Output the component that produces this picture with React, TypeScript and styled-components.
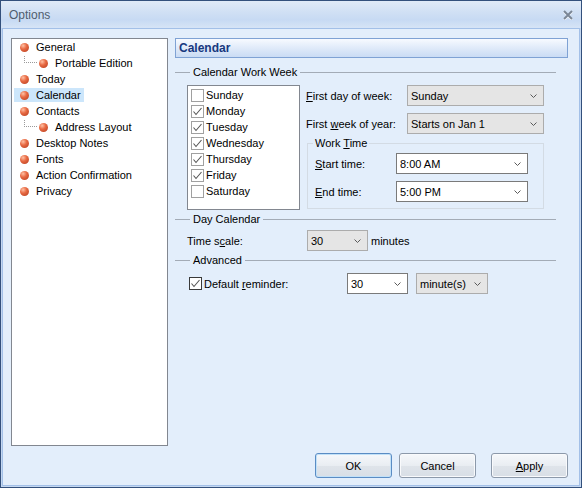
import styled, { createGlobalStyle } from "styled-components";

const GlobalStyle = createGlobalStyle`
  body {
    margin: 0;
    font-family: "Liberation Sans", Arial, sans-serif;
    font-size: 11px;
    color: #000;
  }
  * {
    box-sizing: border-box;
  }
`;

const Window = styled.div`
  width: 582px;
  height: 488px;
  display: flex;
  flex-direction: column;
  border: 1px solid #33507c;
  background: #c4d7f0;
`;

const TitleBar = styled.div`
  height: 27px;
  flex-shrink: 0;
  display: flex;
  align-items: center;
  justify-content: space-between;
  padding: 0 8px;
  background: linear-gradient(#e0eaf7, #cfdff4 45%, #c7daf3 70%, #d6e4f6);
`;

const Title = styled.span`
  font-size: 12px;
  color: #4f5d6e;
`;

const Frame = styled.div`
  flex: 1;
  margin: 0 1px 1px;
  border: 1px solid #a3c0e8;
  background: #e3eefb;
  display: flex;
  flex-direction: column;
  gap: 7px;
  padding: 9px 11px 7px 8px;
`;

const Main = styled.div`
  flex: 1;
  display: flex;
  gap: 7px;
  min-height: 0;
`;

const Tree = styled.div`
  width: 157px;
  flex-shrink: 0;
  border: 1px solid #828790;
  background: #fff;
`;

const TreeRow = styled.div<{ $child?: boolean }>`
  height: 16px;
  display: flex;
  align-items: center;
  padding-left: ${(p) => (p.$child ? 12 : 2)}px;
`;

const Connector = styled.span`
  align-self: flex-start;
  width: 13px;
  height: 7px;
  margin-top: 1px;
  border-left: 1px dotted #9a9a9a;
  border-bottom: 1px dotted #9a9a9a;
`;

const TreeItem = styled.span<{ $selected?: boolean; $child?: boolean }>`
  display: inline-flex;
  align-items: center;
  gap: 7px;
  height: 14px;
  padding: 0 3px 0 ${(p) => (p.$child ? 2 : 6)}px;
  background: ${(p) => (p.$selected ? "#cce6fb" : "transparent")};
`;

const Bullet = styled.span`
  width: 9px;
  height: 9px;
  border-radius: 50%;
  flex-shrink: 0;
  background: radial-gradient(
    circle at 35% 30%,
    #ffc0a4 0%,
    #e86a43 40%,
    #b3391c 100%
  );
`;

const Panel = styled.div`
  flex: 1;
  display: flex;
  flex-direction: column;
`;

const PageHeader = styled.div`
  height: 20px;
  display: flex;
  align-items: center;
  padding-left: 3px;
  border: 1px solid #7fa2d4;
  background: linear-gradient(#f7faff, #dbe7f8 60%, #cadcf4);
  font-size: 12px;
  font-weight: bold;
  color: #17387f;
`;

const Section = styled.div<{ $mt: number }>`
  display: flex;
  align-items: center;
  height: 14px;
  margin-top: ${(p) => p.$mt}px;
  padding-right: 12px;
  &::before {
    content: "";
    width: 15px;
    border-top: 1px solid #a3abb6;
  }
  &::after {
    content: "";
    flex: 1;
    border-top: 1px solid #a3abb6;
  }
`;

const SectionLabel = styled.span`
  padding: 0 3px;
`;

const WeekRow = styled.div`
  display: flex;
  gap: 6px;
  margin-top: 6px;
  padding-left: 12px;
`;

const ListBox = styled.div`
  width: 113px;
  height: 125px;
  border: 1px solid #828790;
  background: #fff;
  padding: 1px 0 0 3px;
`;

const CheckRow = styled.div`
  height: 16px;
  display: flex;
  align-items: center;
  gap: 2px;
`;

const CheckBox = styled.span<{ $dark?: boolean }>`
  width: 13px;
  height: 13px;
  flex-shrink: 0;
  display: flex;
  align-items: center;
  justify-content: center;
  border: 1px solid ${(p) => (p.$dark ? "#3a3a3a" : "#a0a0a0")};
  background: #fff;
`;

const RightCol = styled.div`
  width: 238px;
  display: flex;
  flex-direction: column;
`;

const FieldRow = styled.div<{ $mt?: number; $indent?: number }>`
  display: flex;
  align-items: center;
  margin-top: ${(p) => p.$mt ?? 0}px;
  padding-left: ${(p) => p.$indent ?? 0}px;
`;

const FieldLabel = styled.span<{ $w: number }>`
  width: ${(p) => p.$w}px;
  flex-shrink: 0;
`;

const Combo = styled.div<{ $w: number; $white?: boolean; $ml?: number }>`
  width: ${(p) => p.$w}px;
  height: 21px;
  flex-shrink: 0;
  margin-left: ${(p) => p.$ml ?? 0}px;
  display: flex;
  align-items: center;
  justify-content: space-between;
  padding: 0 6px 0 3px;
  border: 1px solid ${(p) => (p.$white ? "#7a7a7a" : "#acacac")};
  background: ${(p) => (p.$white ? "#fff" : "#e5e5e5")};
`;

const GroupBox = styled.fieldset`
  margin: 3px 0 0 1px;
  width: 237px;
  min-width: 0;
  padding: 0 5px 6px;
  border: 1px solid #d3dbe4;
`;

const GroupLegend = styled.legend`
  padding: 0 2px;
  line-height: 13px;
  font-size: 11px;
`;

const Suffix = styled.span`
  margin-left: 3px;
`;

const ReminderRow = styled.div`
  display: flex;
  align-items: center;
  margin-top: 6px;
  padding-left: 14px;
`;

const ReminderLabel = styled.span`
  width: 143px;
  margin-left: 2px;
`;

const Footer = styled.div`
  height: 25px;
  flex-shrink: 0;
  display: flex;
  justify-content: flex-end;
`;

const Button = styled.button<{ $default?: boolean; $gap?: number }>`
  width: 77px;
  height: 25px;
  margin-right: ${(p) => p.$gap ?? 0}px;
  padding: 0;
  font-family: inherit;
  font-size: 11px;
  color: #000;
  border: 1px solid ${(p) => (p.$default ? "#5a8cc4" : "#8c99aa")};
  border-radius: 3px;
  background: linear-gradient(#f6f8fb, #e9edf2 50%, #dfe4ea 51%, #d8dee6);
  box-shadow: inset 0 0 0 1px ${(p) => (p.$default ? "#c2e1f8" : "#f9fafc")};
`;

const Chevron = () => (
  <svg width="7" height="4" viewBox="0 0 7 4">
    <path d="M0.5 0.5 L3.5 3.5 L6.5 0.5" stroke="#5a5a5a" strokeWidth="1" fill="none" />
  </svg>
);

const Check = () => (
  <svg width="11" height="11" viewBox="0 0 11 11">
    <polyline points="1.5,5.5 4,8.5 9.5,2" stroke="#555" strokeWidth="1.1" fill="none" />
  </svg>
);

const CloseIcon = () => (
  <svg width="10" height="10" viewBox="0 0 10 10">
    <path d="M1 1 L9 9 M9 1 L1 9" stroke="#f4f7fb" strokeWidth="2.6" transform="translate(0 0.7)" />
    <path d="M1 1 L9 9 M9 1 L1 9" stroke="#7a8696" strokeWidth="2" />
  </svg>
);

const tree = [
  { label: "General" },
  { label: "Portable Edition", child: true },
  { label: "Today" },
  { label: "Calendar", selected: true },
  { label: "Contacts" },
  { label: "Address Layout", child: true },
  { label: "Desktop Notes" },
  { label: "Fonts" },
  { label: "Action Confirmation" },
  { label: "Privacy" },
];

const days = [
  { name: "Sunday", on: false },
  { name: "Monday", on: true },
  { name: "Tuesday", on: true },
  { name: "Wednesday", on: true },
  { name: "Thursday", on: true },
  { name: "Friday", on: true },
  { name: "Saturday", on: false },
];

function App() {
  return (
    <Window>
      <GlobalStyle />
      <TitleBar>
        <Title>Options</Title>
        <CloseIcon />
      </TitleBar>
      <Frame>
        <Main>
          <Tree>
            {tree.map((t) => (
              <TreeRow key={t.label} $child={t.child}>
                {t.child && <Connector />}
                <TreeItem $selected={t.selected} $child={t.child}>
                  <Bullet />
                  {t.label}
                </TreeItem>
              </TreeRow>
            ))}
          </Tree>
          <Panel>
            <PageHeader>Calendar</PageHeader>
            <Section $mt={7}>
              <SectionLabel>Calendar Work Week</SectionLabel>
            </Section>
            <WeekRow>
              <ListBox>
                {days.map((d) => (
                  <CheckRow key={d.name}>
                    <CheckBox>{d.on && <Check />}</CheckBox>
                    {d.name}
                  </CheckRow>
                ))}
              </ListBox>
              <RightCol>
                <FieldRow>
                  <FieldLabel $w={101}>
                    <u>F</u>irst day of week:
                  </FieldLabel>
                  <Combo $w={137}>
                    Sunday
                    <Chevron />
                  </Combo>
                </FieldRow>
                <FieldRow $mt={7}>
                  <FieldLabel $w={101}>
                    First <u>w</u>eek of year:
                  </FieldLabel>
                  <Combo $w={137}>
                    Starts on Jan 1
                    <Chevron />
                  </Combo>
                </FieldRow>
                <GroupBox>
                  <GroupLegend>
                    Work <u>T</u>ime
                  </GroupLegend>
                  <FieldRow $mt={3} $indent={2}>
                    <FieldLabel $w={81}>
                      <u>S</u>tart time:
                    </FieldLabel>
                    <Combo $w={132} $white>
                      8:00 AM
                      <Chevron />
                    </Combo>
                  </FieldRow>
                  <FieldRow $mt={7} $indent={2}>
                    <FieldLabel $w={81}>
                      <u>E</u>nd time:
                    </FieldLabel>
                    <Combo $w={132} $white>
                      5:00 PM
                      <Chevron />
                    </Combo>
                  </FieldRow>
                </GroupBox>
              </RightCol>
            </WeekRow>
            <Section $mt={2}>
              <SectionLabel>Day Calendar</SectionLabel>
            </Section>
            <FieldRow $mt={4} $indent={12}>
              <FieldLabel $w={120}>
                Time s<u>c</u>ale:
              </FieldLabel>
              <Combo $w={61}>
                30
                <Chevron />
              </Combo>
              <Suffix>minutes</Suffix>
            </FieldRow>
            <Section $mt={2}>
              <SectionLabel>Advanced</SectionLabel>
            </Section>
            <ReminderRow>
              <CheckBox $dark>
                <Check />
              </CheckBox>
              <ReminderLabel>
                Default <u>r</u>eminder:
              </ReminderLabel>
              <Combo $w={61} $white>
                30
                <Chevron />
              </Combo>
              <Combo $w={72} $ml={8}>
                minute(s)
                <Chevron />
              </Combo>
            </ReminderRow>
          </Panel>
        </Main>
        <Footer>
          <Button $default $gap={7}>
            OK
          </Button>
          <Button $gap={15}>Cancel</Button>
          <Button>
            <u>A</u>pply
          </Button>
        </Footer>
      </Frame>
    </Window>
  );
}

export default App;
